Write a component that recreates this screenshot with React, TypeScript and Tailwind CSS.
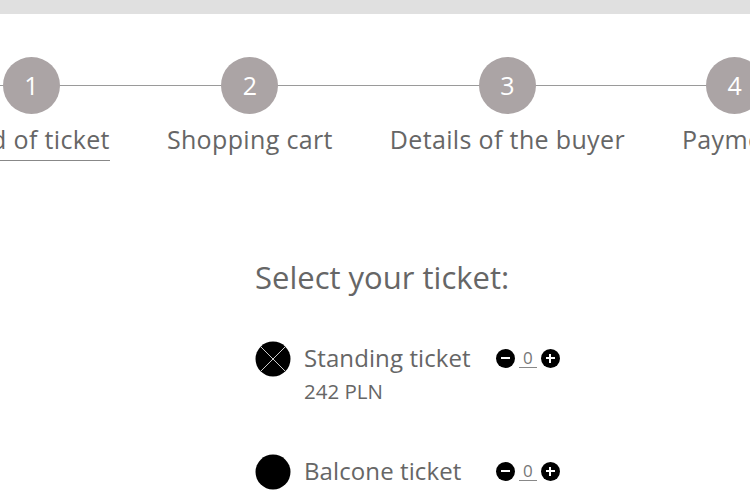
import React from "react";

const steps = ["Kind of ticket", "Shopping cart", "Details of the buyer", "Payment"];

function Counter() {
  return (
    <div className="flex items-center gap-[4px]">
      <span className="w-[19px] h-[19px] rounded-full bg-black flex items-center justify-center">
        <span className="block w-[9px] h-[2px] bg-white" />
      </span>
      <span className="text-[17px] leading-none text-[#777] border-b border-[#888] px-[4px] pb-[1px]">0</span>
      <span className="w-[19px] h-[19px] rounded-full bg-black flex items-center justify-center relative">
        <span className="block w-[9px] h-[2px] bg-white" />
        <span className="absolute block w-[2px] h-[9px] bg-white" />
      </span>
    </div>
  );
}

export default function App() {
  return (
    <div className="w-[750px] h-[500px] overflow-hidden bg-white relative" style={{ fontFamily: '"Open Sans", "Noto Sans", sans-serif' }}>
      <div className="h-[14px] bg-[#e0e0e0]" />
      <div className="relative mt-[43px]">
        <div className="absolute left-0 right-0 top-[28px] h-[1px] bg-[#9a9a9a]" />
        <div className="flex gap-[57px] ml-[-47px] relative">
          {steps.map((s, i) => (
            <div key={s} className="flex flex-col items-center shrink-0">
              <div className="w-[57px] h-[57px] rounded-full bg-[#aba4a5] flex items-center justify-center text-white text-[25px]">
                {i + 1}
              </div>
              <div className={"mt-[7px] text-[25px] leading-[36px] pb-[3px] text-[#666] whitespace-nowrap tracking-[0.35px] " + (i === 0 ? "border-b border-[#888]" : "")}>
                {s}
              </div>
            </div>
          ))}
        </div>
      </div>
      <div className="ml-[255px] mt-[96px]">
        <div className="text-[31px] leading-[40px] text-[#666]">Select your ticket:</div>
        <div className="mt-[45px] flex items-start">
          <svg width="36" height="36" viewBox="0 0 36 36" className="shrink-0 mt-[-1px]">
            <circle cx="18" cy="18" r="17.5" fill="black" />
            <line x1="6" y1="6" x2="30" y2="30" stroke="white" strokeWidth="0.8" />
            <line x1="30" y1="6" x2="6" y2="30" stroke="white" strokeWidth="0.8" />
          </svg>
          <div className="ml-[13px]">
            <div className="flex items-center">
              <span className="w-[192px] text-[24px] leading-[32px] text-[#666] tracking-[0.1px]">Standing ticket</span>
              <Counter />
            </div>
            <div className="text-[20.5px] leading-[28px] text-[#666] mt-[3px]">242 PLN</div>
          </div>
        </div>
        <div className="mt-[50px] flex items-start">
          <svg width="36" height="36" viewBox="0 0 36 36" className="shrink-0 mt-[-1px]">
            <circle cx="18" cy="18" r="17.5" fill="black" />
          </svg>
          <div className="ml-[13px]">
            <div className="flex items-center">
              <span className="w-[192px] text-[24px] leading-[32px] text-[#666] tracking-[0.1px]">Balcone ticket</span>
              <Counter />
            </div>
          </div>
        </div>
      </div>
    </div>
  );
}
